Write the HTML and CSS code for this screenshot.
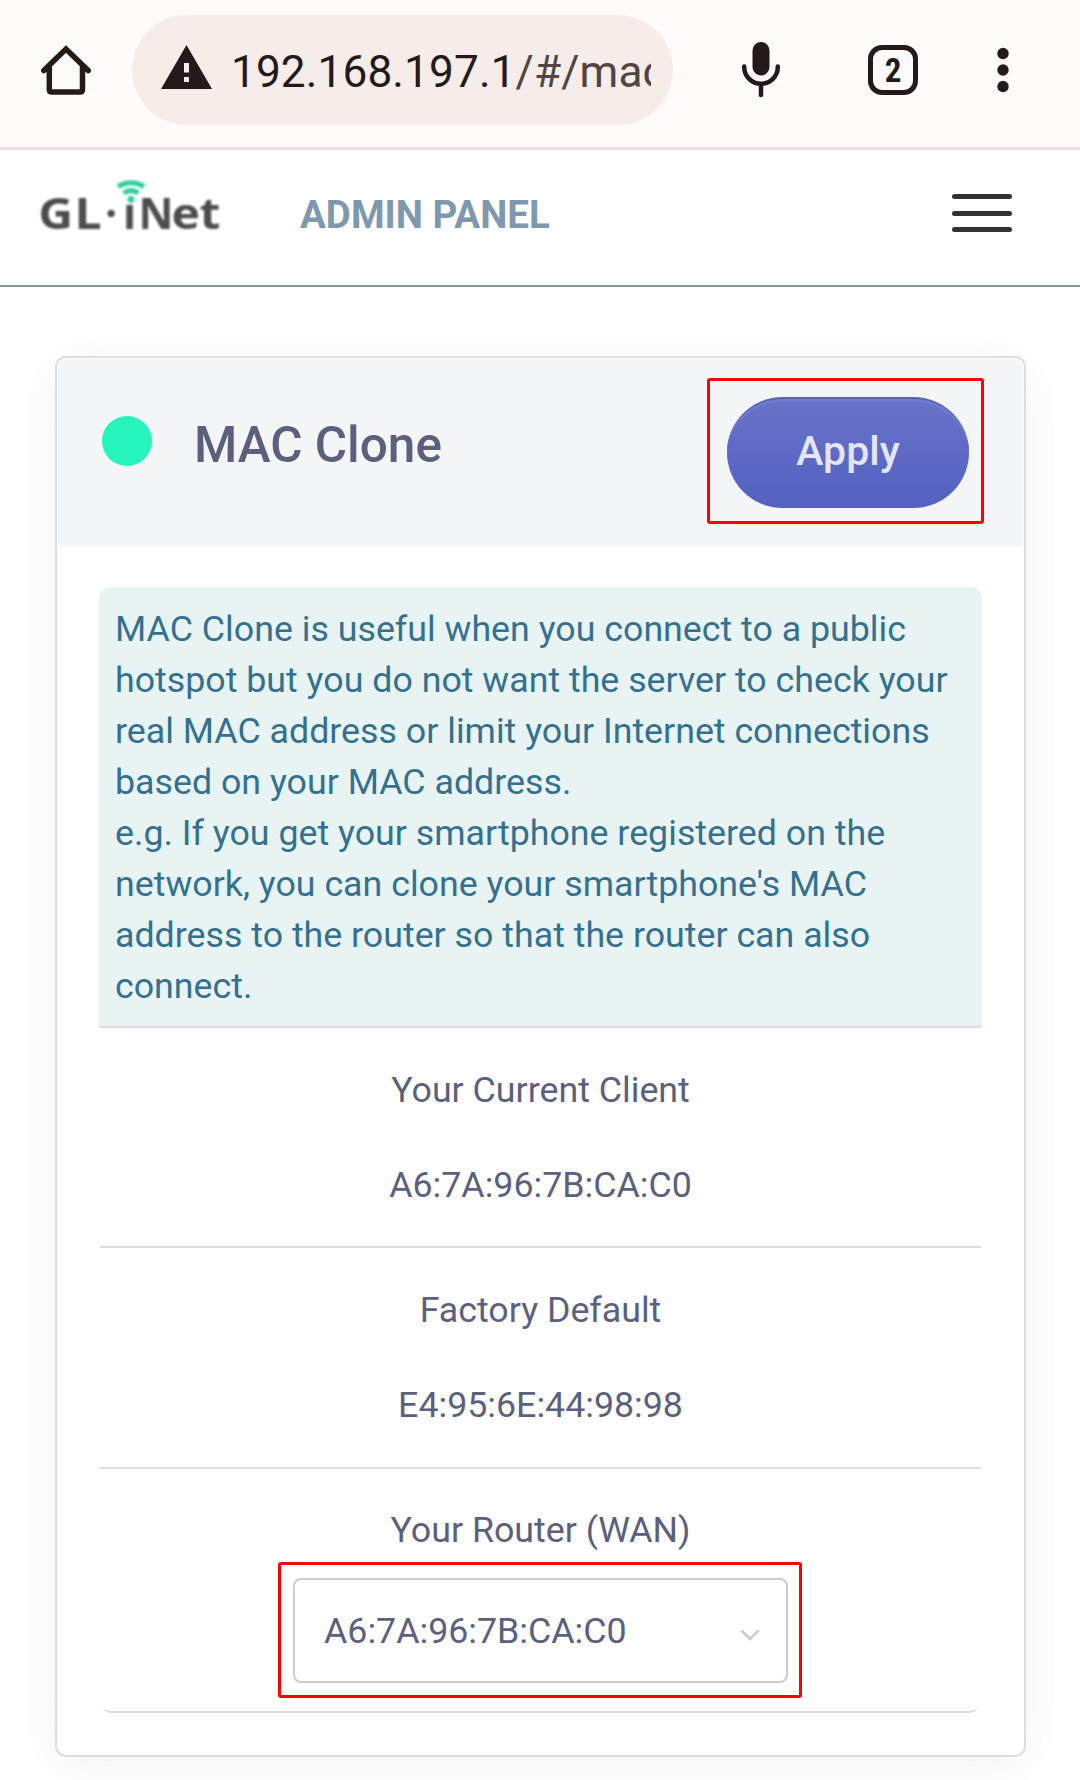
FILE: index.html
```html
<!DOCTYPE html>
<html lang="en">
<head>
<meta charset="utf-8">
<title>GL-iNet Admin Panel</title>
<link rel="stylesheet" href="styles.css">
</head>
<body>
<header class="browser-bar">
  <svg class="home-icon" viewBox="0 0 50 50"><path d="M2.800 25.500 25 4 47.200 25.500M8.300 21V44.500Q8.300 47 10.800 47H39Q41.500 47 41.500 44.500V21"/></svg>
  <div class="address">
    <svg class="warn-icon" viewBox="0 0 51 44"><path fill-rule="evenodd" d="M25.500 0 51 44H0ZM23 18v9.500h5V18ZM23 32v5h5v-5Z"/></svg>
    <div class="url">192.168.197.1<span class="url-path">/#/macclone</span></div>
  </div>
  <svg class="mic-icon" viewBox="0 0 38 56"><rect x="10.500" y="0" width="17" height="33.500" rx="8.500"/><path d="M2.200 24.500V25A16.800 16.800 0 0 0 35.800 25V24.500M19 42V53"/></svg>
  <div class="tabs">2</div>
  <svg class="dots-icon" viewBox="0 0 12 46"><circle cx="6" cy="6.500" r="5.700"/><circle cx="6" cy="23" r="5.700"/><circle cx="6" cy="39.500" r="5.700"/></svg>
</header>
<nav class="site-bar">
  <svg class="logo" viewBox="0 0 176 50">
    <g class="logo-text">
      <text transform="scale(1.12 1)" y="49" x="-2.500 30">GL</text>
      <text y="49" x="64 82 97.500">·ıN</text>
      <text transform="scale(1.120 1)" y="49" x="116.500 141.500">et</text>
    </g>
    <g class="logo-waves"><path d="M77 6.500Q90-1 103 6.500"/><path d="M82.500 12.800Q90 8.500 97.500 12.800"/><circle cx="90" cy="19.500" r="3.400"/></g>
  </svg>
  <div class="brand">ADMIN PANEL</div>
  <div class="menu"><i></i><i></i><i></i></div>
</nav>
<main class="card">
  <div class="card-head">
    <span class="status"></span>
    <h1>MAC Clone</h1>
    <div class="mark mark-apply"><button class="apply">Apply</button></div>
  </div>
  <div class="card-body">
    <p class="info">MAC Clone is useful when you connect to a public<br>hotspot but you do not want the server to check your<br>real MAC address or limit your Internet connections<br>based on your MAC address.<br>e.g. If you get your smartphone registered on the<br>network, you can clone your smartphone's MAC<br>address to the router so that the router can also<br>connect.</p>
    <section class="row"><div>Your Current Client</div><div>A6:7A:96:7B:CA:C0</div></section>
    <section class="row row-factory"><div>Factory Default</div><div>E4:95:6E:44:98:98</div></section>
    <section class="row row-router">
      <div>Your Router (WAN)</div>
      <div class="mark mark-select">
        <div class="select"><span>A6:7A:96:7B:CA:C0</span><svg class="chevron" viewBox="0 0 20 13"><path d="M1.500 1.500 10 10 18.500 1.500"/></svg></div>
      </div>
    </section>
  </div>
</main>
</body>
</html>
```
FILE: styles.css
```css
* { box-sizing: border-box; }
body {
  margin: 0;
  height: 1780px;
  overflow: hidden;
  background: #fff;
  color: #5c607c;
  font: 35.75px/51px Roboto, sans-serif;
}
svg { display: block; flex: none; overflow: visible; }

.browser-bar {
  display: flex;
  height: 150px;
  padding: 15px 0 0 41px;
  background: #fffbfa;
  border-bottom: 3px solid #f2dfdd;
  color: #231a19;
}
.home-icon { width: 50px; height: 50px; margin: 30px 41px 0 0; fill: none; stroke: #231a19; stroke-width: 5.5; stroke-linecap: round; }
.address {
  display: flex;
  width: 541px;
  height: 110px;
  padding: 30px 22px 0 29px;
  border-radius: 55px;
  background: #f6ecea;
}
.warn-icon { width: 51px; height: 44px; margin-right: 19px; fill: #231a19; }
.url { flex: 1; overflow: hidden; white-space: nowrap; font-size: 44.2px; line-height: 54px; letter-spacing: .1px; }
.url-path { color: #534341; }
.mic-icon { width: 38px; height: 56px; margin: 27px 88px 0 69px; fill: #231a19; }
.mic-icon path { fill: none; stroke: #231a19; stroke-width: 4.5; stroke-linecap: round; }
.tabs {
  width: 50px;
  height: 50px;
  margin-top: 30px;
  border: 5.5px solid #231a19;
  border-radius: 14px;
  text-align: center;
  font: 700 33px/42px "Roboto Condensed", Roboto, sans-serif;
}
.dots-icon { width: 12px; height: 46px; margin: 32px 0 0 79px; fill: #231a19; }

.site-bar {
  display: flex;
  height: 137px;
  padding: 30px 68px 0 41px;
  border-bottom: 2px solid #8497a8;
}
.logo { width: 176px; height: 50px; filter: blur(.9px); }
.logo-text { font: 700 43px "Open Sans", sans-serif; fill: #4c4c4c; }
.logo-waves { fill: none; stroke: #2fcfa0; stroke-width: 5; }
.logo-waves circle { fill: #2fcfa0; stroke: none; }
.brand { margin: 9px auto 0 83px; color: #7f98ad; font-size: 38.5px; font-weight: 700; line-height: 51px; }
.menu { display: flex; flex-direction: column; gap: 11.5px; margin-top: 14px; }
.menu i { width: 60px; height: 5px; border-radius: 3px; background: #333; }

.card {
  width: 971px;
  height: 1401px;
  margin: 69px 0 0 55px;
  padding: 1px;
  border: 2px solid #ddd;
  border-radius: 11px;
  box-shadow: 0 8px 55px rgba(0, 0, 0, .05);
  background: #fff;
}
.card-head {
  display: flex;
  height: 187px;
  padding: 0 39px 0 44px;
  border-radius: 9px 9px 0 0;
  background: #f3f5f7;
}
.status { width: 50px; height: 50px; margin: 57px 42px 0 0; border-radius: 50%; background: #25f5bd; }
h1 { margin: 61px auto 0 0; font-size: 49.5px; line-height: 51px; font-weight: 500; }
.mark { border: 3px solid #f00; border-radius: 3px; }
.mark-apply { width: 277px; height: 146px; margin-top: 19px; padding: 16px 0 0 17px; }
.apply {
  display: block;
  width: 242px;
  height: 111px;
  padding: 0 0 5px;
  border: 0;
  border-top: 2px solid #5b66a9;
  border-radius: 56px;
  background: linear-gradient(#6772c9, #5461c1);
  box-shadow: inset 0 3px 0 #6f7bce;
  color: #e3e6fa;
  font: 500 41px/51px Roboto, sans-serif;
}
.card-body { padding: 41px 41px 0; }
.info {
  height: 441px;
  margin: 0;
  padding: 17px 0 0 16px;
  border-bottom: 2px solid #ddd;
  border-radius: 11px 11px 2px 2px;
  background: #e8f4f4;
  color: #35708f;
  white-space: nowrap;
}
.row {
  display: flex;
  flex-direction: column;
  align-items: center;
  gap: 44px;
  height: 220px;
  margin: 0 1px;
  padding-top: 37px;
  border-bottom: 2px solid #ddd;
}
.row-factory { height: 221px; }
.row-router { height: 244px; margin: 0 3px; padding-top: 36px; gap: 6px; border-radius: 0 0 9px 9px; }
.mark-select { width: 524px; height: 136px; margin-right: 1px; padding: 13px 11px 0 12px; }
.select {
  display: flex;
  justify-content: space-between;
  width: 495px;
  height: 105px;
  padding: 26px 26px 0 29px;
  border: 2px solid #ccc;
  border-radius: 8px;
}
.chevron { width: 20px; height: 13px; margin-top: 23px; fill: none; stroke: #ccc; stroke-width: 2.5; }
```
